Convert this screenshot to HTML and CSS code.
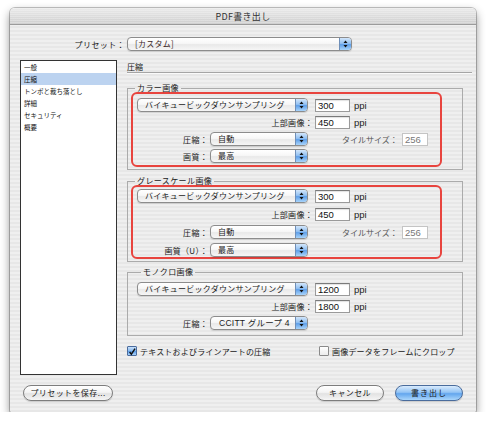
FILE: index.html
```html
<!DOCTYPE html>
<html lang="ja">
<head>
<meta charset="utf-8">
<title>PDF書き出し</title>
<link rel="stylesheet" href="styles.css">
</head>
<body>
<div class="window">
  <div class="titlebar">PDF書き出し</div>

  <div class="preset-row">
    <span class="preset-label">プリセット：</span>
    <div class="popup preset-popup">
      <span class="popup-text">[カスタム]</span>
      <span class="popup-arrow"><svg width="5" height="8" viewBox="0 0 5 8"><path d="M2.5 0.5 L4.5 3 L0.5 3 Z M0.5 5 L4.5 5 L2.5 7.5 Z" fill="#111"/></svg></span>
    </div>
  </div>

  <div class="main">
    <ul class="sidebar">
      <li>一般</li>
      <li class="selected">圧縮</li>
      <li>トンボと裁ち落とし</li>
      <li>詳細</li>
      <li>セキュリティ</li>
      <li>概要</li>
    </ul>

    <div class="panel">
      <div class="panel-title">圧縮</div>

      <fieldset class="group group-color">
        <legend>カラー画像</legend>
        <div class="highlight hl-color">
          <div class="row">
            <div class="popup popup-wide"><span class="popup-text">バイキュービックダウンサンプリング</span><span class="popup-arrow"><svg width="5" height="8" viewBox="0 0 5 8"><path d="M2.5 0.5 L4.5 3 L0.5 3 Z M0.5 5 L4.5 5 L2.5 7.5 Z" fill="#111"/></svg></span></div>
            <div class="field">300</div>
            <span class="unit">ppi</span>
          </div>
          <div class="row">
            <span class="label label-long">上部画像：</span>
            <div class="field">450</div>
            <span class="unit">ppi</span>
          </div>
          <div class="row">
            <span class="label label-short">圧縮：</span>
            <div class="popup popup-narrow"><span class="popup-text">自動</span><span class="popup-arrow"><svg width="5" height="8" viewBox="0 0 5 8"><path d="M2.5 0.5 L4.5 3 L0.5 3 Z M0.5 5 L4.5 5 L2.5 7.5 Z" fill="#111"/></svg></span></div>
            <span class="label tile-label">タイルサイズ：</span>
            <div class="field field-disabled">256</div>
          </div>
          <div class="row">
            <span class="label label-short">画質：</span>
            <div class="popup popup-narrow"><span class="popup-text">最高</span><span class="popup-arrow"><svg width="5" height="8" viewBox="0 0 5 8"><path d="M2.5 0.5 L4.5 3 L0.5 3 Z M0.5 5 L4.5 5 L2.5 7.5 Z" fill="#111"/></svg></span></div>
          </div>
        </div>
      </fieldset>

      <fieldset class="group group-gray">
        <legend>グレースケール画像</legend>
        <div class="highlight hl-gray">
          <div class="row">
            <div class="popup popup-wide"><span class="popup-text">バイキュービックダウンサンプリング</span><span class="popup-arrow"><svg width="5" height="8" viewBox="0 0 5 8"><path d="M2.5 0.5 L4.5 3 L0.5 3 Z M0.5 5 L4.5 5 L2.5 7.5 Z" fill="#111"/></svg></span></div>
            <div class="field">300</div>
            <span class="unit">ppi</span>
          </div>
          <div class="row">
            <span class="label label-long">上部画像：</span>
            <div class="field">450</div>
            <span class="unit">ppi</span>
          </div>
          <div class="row">
            <span class="label label-short">圧縮：</span>
            <div class="popup popup-narrow"><span class="popup-text">自動</span><span class="popup-arrow"><svg width="5" height="8" viewBox="0 0 5 8"><path d="M2.5 0.5 L4.5 3 L0.5 3 Z M0.5 5 L4.5 5 L2.5 7.5 Z" fill="#111"/></svg></span></div>
            <span class="label tile-label">タイルサイズ：</span>
            <div class="field field-disabled">256</div>
          </div>
          <div class="row">
            <span class="label label-short">画質（U）：</span>
            <div class="popup popup-narrow"><span class="popup-text">最高</span><span class="popup-arrow"><svg width="5" height="8" viewBox="0 0 5 8"><path d="M2.5 0.5 L4.5 3 L0.5 3 Z M0.5 5 L4.5 5 L2.5 7.5 Z" fill="#111"/></svg></span></div>
          </div>
        </div>
      </fieldset>

      <fieldset class="group group-mono">
        <legend>モノクロ画像</legend>
        <div class="rows-mono">
          <div class="row">
            <div class="popup popup-wide"><span class="popup-text">バイキュービックダウンサンプリング</span><span class="popup-arrow"><svg width="5" height="8" viewBox="0 0 5 8"><path d="M2.5 0.5 L4.5 3 L0.5 3 Z M0.5 5 L4.5 5 L2.5 7.5 Z" fill="#111"/></svg></span></div>
            <div class="field">1200</div>
            <span class="unit">ppi</span>
          </div>
          <div class="row">
            <span class="label label-long">上部画像：</span>
            <div class="field">1800</div>
            <span class="unit">ppi</span>
          </div>
          <div class="row">
            <span class="label label-short">圧縮：</span>
            <div class="popup popup-narrow"><span class="popup-text ccitt">CCITT グループ 4</span><span class="popup-arrow"><svg width="5" height="8" viewBox="0 0 5 8"><path d="M2.5 0.5 L4.5 3 L0.5 3 Z M0.5 5 L4.5 5 L2.5 7.5 Z" fill="#111"/></svg></span></div>
          </div>
        </div>
      </fieldset>

      <div class="checks">
        <label class="check check-first"><span class="box box-on"><svg width="10" height="10" viewBox="0 0 10 10"><path d="M2 5 L4.2 7.8 L8.8 0.8" fill="none" stroke="#111" stroke-width="1.8"/></svg></span>テキストおよびラインアートの圧縮</label>
        <label class="check"><span class="box"></span>画像データをフレームにクロップ</label>
      </div>
    </div>
  </div>

  <div class="buttons">
    <button class="btn btn-save">プリセットを保存...</button>
    <div class="btn-group">
      <button class="btn">キャンセル</button>
      <button class="btn btn-default">書き出し</button>
    </div>
  </div>
</div>
</body>
</html>
```

FILE: styles.css
```css
* { box-sizing: border-box; }

html, body {
  margin: 0;
  padding: 0;
  background: #ffffff;
}

body {
  font-family: "Noto Sans CJK JP", "DejaVu Sans", sans-serif;
  font-size: 8px;
  color: #1a1a1a;
}

.window {
  margin: 8px 0 0 10px;
  width: 466px;
  height: 404px;
  border-radius: 5px 5px 2px 2px;
  background: repeating-linear-gradient(to bottom, #efefef 0, #efefef 2px, #e7e7e7 2px, #e7e7e7 4px);
  box-shadow: 0 0 0 1px rgba(0,0,0,0.22), 0 4px 10px rgba(0,0,0,0.45);
  overflow: hidden;
}

.titlebar {
  height: 17px;
  line-height: 17px;
  text-align: center;
  font-size: 9px;
  color: #333;
  letter-spacing: 0.3px;
  background: repeating-linear-gradient(to bottom, rgba(255,255,255,0.25) 0, rgba(255,255,255,0.25) 1px, rgba(0,0,0,0) 1px, rgba(0,0,0,0) 2px),
              linear-gradient(to bottom, #eaeaea, #cfcfcf);
  border-bottom: 1px solid #9b9b9b;
}

/* preset row */
.preset-row {
  display: flex;
  margin-top: 12px;
  height: 14px;
  align-items: center;
}

.preset-label {
  width: 115px;
  text-align: right;
  margin-right: 2px;
  letter-spacing: 0.4px;
}

/* popup */
.popup {
  display: flex;
  height: 14px;
  border: 1px solid #8c8c8c;
  border-radius: 4px;
  overflow: hidden;
  background: linear-gradient(to bottom, #ffffff 0%, #f7f7f7 45%, #e9e9e9 55%, #f6f6f6 100%);
  box-shadow: 0 1px 1px rgba(0,0,0,0.12);
}

.popup-text {
  flex: 1;
  padding-left: 7px;
  line-height: 12px;
  white-space: nowrap;
  overflow: hidden;
  letter-spacing: 0.25px;
}

.popup-arrow {
  width: 12px;
  display: flex;
  align-items: center;
  justify-content: center;
  border-left: 1px solid #6f8fb8;
  background: linear-gradient(to bottom, #d2e6fb 0%, #93c1f2 45%, #5f9fe8 55%, #a8d4fb 100%);
}

.preset-popup { width: 225px; }
.preset-popup .popup-text { color: #3a1f1f; }

.popup-wide { width: 171px; }
.popup-narrow { width: 98px; }

.ccitt {
  font-family: "Liberation Sans", "Noto Sans CJK JP", sans-serif;
  font-size: 8.5px;
  padding-left: 8px;
}

/* main */
.main {
  display: flex;
  align-items: flex-start;
  margin-top: 9px;
  padding-left: 10px;
}

.sidebar {
  list-style: none;
  margin: 0 10px 0 0;
  padding: 0;
  width: 97px;
  height: 315px;
  background: #ffffff;
  border: 1px solid #333333;
}

.sidebar li {
  height: 12px;
  line-height: 12px;
  padding-left: 3px;
  font-size: 6.5px;
  color: #111;
  white-space: nowrap;
}

.sidebar li.selected {
  background: #bcd3f0;
}

.panel {
  width: 345px;
}

.panel-title {
  padding-top: 2px;
  line-height: 10px;
  height: 13px;
  border-bottom: 1px solid #a5a5a5;
  box-shadow: 0 1px 0 #fafafa;
}

/* groups */
.group {
  margin: 0;
  width: 336px;
  min-width: 0;
  border: 1px solid #ababab;
  padding: 0 0 2px 3px;
}

.group legend {
  font-size: 8px;
  line-height: 8px;
  padding: 0 2px;
  margin-left: 4px;
  letter-spacing: 0.4px;
}

.group-color { margin-top: 11px; }
.group-gray { margin-top: 7px; }
.group-mono { margin-top: 6px; padding: 6px 0 5px 9px; }

.highlight {
  width: 311px;
  border: 2px solid #e8443e;
  border-radius: 6px;
  padding: 4px 0 2px 4px;
  display: flex;
  flex-direction: column;
  gap: 3px;
}

.hl-gray {
  padding-top: 2px;
  padding-bottom: 0;
  gap: 4px;
}

.rows-mono {
  display: flex;
  flex-direction: column;
  gap: 3px;
}

.row {
  display: flex;
  align-items: center;
  height: 14px;
}

.label {
  text-align: right;
  white-space: nowrap;
  letter-spacing: 0.3px;
}

.label-long { width: 176px; margin-right: 2px; }
.label-short { width: 71px; margin-right: 2px; }

.tile-label {
  width: 55px;
  margin-left: 34px;
  margin-right: 5px;
  color: #555;
  letter-spacing: 0;
}

.field {
  width: 35px;
  height: 13px;
  margin-left: 7px;
  background: #ffffff;
  border: 1px solid #9a9a9a;
  border-top-color: #7a7a7a;
  box-shadow: inset 0 1px 1px rgba(0,0,0,0.12);
  font-family: "Liberation Sans", sans-serif;
  font-size: 9.5px;
  line-height: 11px;
  padding-left: 2px;
  color: #111;
}

.label + .field { margin-left: 0; }

.field-disabled {
  width: 26px;
  color: #777;
  border-color: #c4c4c4;
  box-shadow: none;
}

.unit {
  margin-left: 4px;
  font-family: "Liberation Sans", sans-serif;
  font-size: 9.5px;
  color: #222;
}

/* checkboxes */
.checks {
  display: flex;
  margin-top: 10px;
  height: 10px;
  align-items: center;
}

.check {
  display: flex;
  align-items: center;
  white-space: nowrap;
  letter-spacing: 0.2px;
}

.check-first { width: 192px; }

.box {
  width: 10px;
  height: 10px;
  margin-right: 3px;
  border: 1px solid #8a8a8a;
  border-radius: 1px;
  background: linear-gradient(to bottom, #ffffff, #ececec);
  display: flex;
}

.box-on {
  border-color: #4b6c9e;
  background: linear-gradient(to bottom, #c9e1fb 0%, #84b8ef 50%, #5c9de8 55%, #a9d3fb 100%);
}

.box svg { display: block; }

/* buttons */
.buttons {
  display: flex;
  justify-content: space-between;
  margin-top: 10px;
  padding: 0 13px;
}

.btn-group {
  display: flex;
  gap: 11px;
}

.btn {
  height: 16px;
  width: 68px;
  padding: 0;
  border: 1px solid #7d7d7d;
  border-radius: 8px;
  background: linear-gradient(to bottom, #ffffff 0%, #f4f4f4 45%, #e2e2e2 55%, #f5f5f5 100%);
  font-family: "Noto Sans CJK JP", sans-serif;
  font-size: 8px;
  line-height: 14px;
  color: #1a1a1a;
  letter-spacing: 0.4px;
  box-shadow: 0 1px 1px rgba(0,0,0,0.15);
}

.btn-save { width: 90px; }

.btn-default {
  border-color: #4a6c9c;
  background: linear-gradient(to bottom, #d9ebfd 0%, #93c4f5 45%, #63a6ee 55%, #aad6fb 100%);
  letter-spacing: 1px;
}
```
